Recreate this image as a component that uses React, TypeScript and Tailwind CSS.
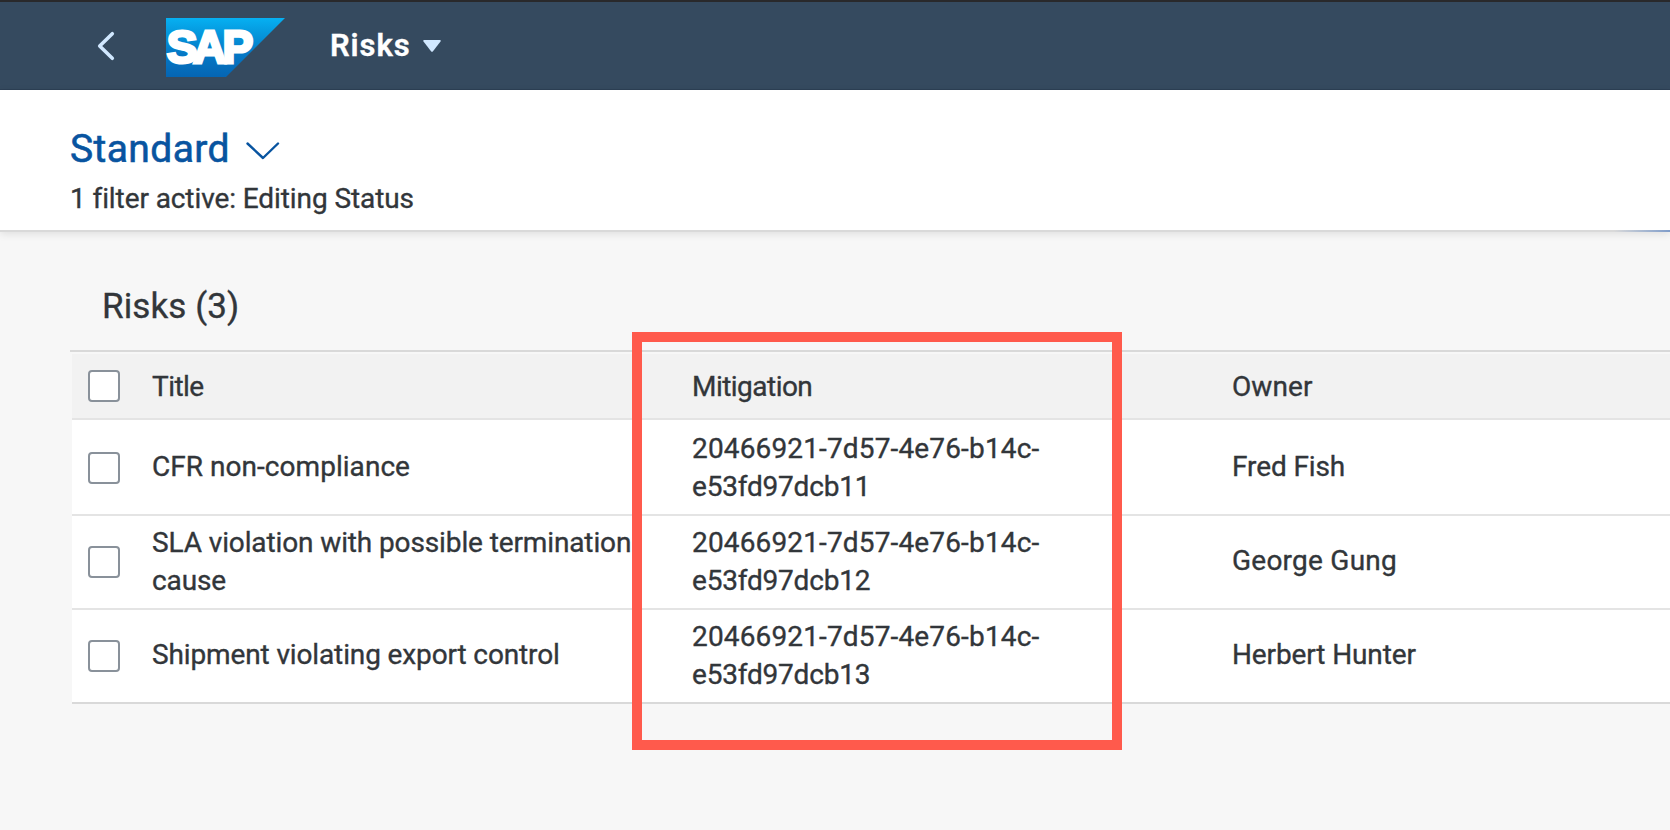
type Risk = { title: string; mitigation: [string, string]; owner: string; titleClass: string; ownerClass: string };

const risks: Risk[] = [
  { title: "CFR non-compliance", mitigation: ["20466921-7d57-4e76-b14c-", "e53fd97dcb11"], owner: "Fred Fish", titleClass: "-translate-y-px tracking-[0.04px]", ownerClass: "tracking-[-0.1px]" },
  { title: "SLA violation with possible termination cause", mitigation: ["20466921-7d57-4e76-b14c-", "e53fd97dcb12"], owner: "George Gung", titleClass: "tracking-[-0.12px]", ownerClass: "tracking-[0.24px]" },
  { title: "Shipment violating export control", mitigation: ["20466921-7d57-4e76-b14c-", "e53fd97dcb13"], owner: "Herbert Hunter", titleClass: "-translate-y-px tracking-[-0.13px]", ownerClass: "tracking-[-0.12px]" },
];

function Checkbox() {
  return <span className="block size-8 rounded-[4px] border-2 border-[#89919a] bg-white" />;
}

function SapLogo() {
  return (
    <svg width="120" height="60" viewBox="0 0 120 60" className="block">
      <defs>
        <linearGradient id="sap" x1="0" y1="0" x2="0" y2="1">
          <stop offset="0" stopColor="#06b0f2" />
          <stop offset="0.25" stopColor="#0599de" />
          <stop offset="0.6" stopColor="#0579c6" />
          <stop offset="1" stopColor="#0565b3" />
        </linearGradient>
      </defs>
      <path d="M0 0H119L60 59H0Z" fill="url(#sap)" />
      <text x="0.8 27 56.5" y="45.4" fill="#fff" stroke="#fff" strokeWidth="3" fontFamily="Liberation Sans, sans-serif" fontWeight="700" fontSize="46">SAP</text>
    </svg>
  );
}

export default function App() {
  return (
    <div className="flex h-[830px] w-[1670px] flex-col overflow-hidden bg-[#f7f7f7] font-[Roboto,sans-serif] text-[28px] leading-[38px] text-[#32363a] [-webkit-text-stroke:0.35px]">
      <header className="flex h-[90px] shrink-0 items-start border-t-2 border-b border-t-[#29292b] border-b-[#2d4055] bg-[#354a5f]">
        <svg width="20" height="32" viewBox="0 0 20 32" className="mt-7 ml-24" fill="none" stroke="#d1e8ff" strokeWidth="3.6" strokeLinecap="round" strokeLinejoin="round">
          <path d="M16.3 3.7L3.7 16L16.3 28.3" />
        </svg>
        <div className="mt-4 ml-[50px]"><SapLogo /></div>
        <div className="mt-6 ml-[44px] flex items-center">
          <span className="block w-[93px] text-[31px] leading-10 font-semibold tracking-[0.9px] whitespace-nowrap text-white">Risks</span>
          <svg width="18" height="12" viewBox="0 0 18 12" fill="#d1e8ff" className="block">
            <path d="M1 0H17Q18.2 .3 17.5 1.4L10 11.2Q9 12.2 8 11.2L.5 1.4Q-.2 .3 1 0Z" />
          </svg>
        </div>
      </header>

      <section className="relative z-10 h-[142px] shrink-0 border-b-2 border-[#d9d9d9] bg-white pt-[33px] pl-[70px] shadow-[0_2px_8px_rgba(0,0,0,0.10)]">
        <div className="flex h-[52px] items-center">
          <h1 className="w-[176px] text-[39px] leading-[52px] tracking-[0.4px] whitespace-nowrap text-[#0854a0] [-webkit-text-stroke:0.6px]">Standard</h1>
          <svg width="34" height="18" viewBox="0 0 34 18" className="mt-1" fill="none" stroke="#0854a0" strokeWidth="2.4" strokeLinecap="round" strokeLinejoin="round">
            <path d="M1.5 1.5L17 16L32 1.5" />
          </svg>
        </div>
        <p className="mt-[5px] leading-[38px] tracking-[-0.09px]">1 filter active: Editing Status</p>
        <div className="absolute right-0 -bottom-0.5 h-0.5 w-14 bg-linear-to-r from-[#d9d9d9] to-[#7f9cc9]" />
      </section>

      <main className="relative grow">
        <h2 className="pt-[51px] pl-[102px] text-[35px] leading-[48px] tracking-[0.1px]">Risks (3)</h2>
        <div className="mt-[19px] ml-[70px] border-t-2 border-[#d9d9d9] pt-0.5 pl-0.5">
          <div className="grid h-[66px] grid-cols-[80px_540px_540px_1fr] items-center border-b-2 border-[#e4e4e4] bg-[#f2f2f2]">
            <div className="pl-4"><Checkbox /></div>
            <div className="pt-0.5 tracking-[-0.55px]">Title</div>
            <div className="pt-0.5 tracking-[-0.53px]">Mitigation</div>
            <div className="pt-0.5 tracking-[0.1px]">Owner</div>
          </div>
          {risks.map((r) => (
            <div key={r.title} className="grid h-[94px] grid-cols-[80px_540px_540px_1fr] items-center border-b-2 border-[#e4e4e4] bg-white last:border-[#d9d9d9] nth-2:h-24 nth-2:pt-0.5">
              <div className="pl-4"><Checkbox /></div>
              <div className={"w-[482px] " + r.titleClass}>{r.title}</div>
              <div className="w-[480px]">
                <span className="tracking-[0.15px]">{r.mitigation[0]}</span>
                <span className="tracking-[-0.2px]">{r.mitigation[1]}</span>
              </div>
              <div className="-translate-y-px"><span className={r.ownerClass}>{r.owner}</span></div>
            </div>
          ))}
        </div>
        <div className="absolute top-[100px] left-[632px] h-[418px] w-[490px] border-10 border-[#ff5a4c]" />
      </main>
    </div>
  );
}
